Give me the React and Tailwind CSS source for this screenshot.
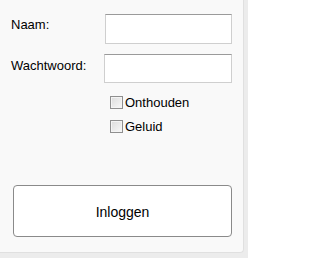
import React from 'react';

function Check({label}) {
  return (
    <label className="flex items-center gap-[2px] h-[13px]">
      <span className="w-[13px] h-[13px] border border-[#8f8f8f] bg-gradient-to-br from-[#dcdcdc] to-[#f8f8f8] shadow-[inset_0_0_0_1px_#f4f4f4]"></span>
      <span className="text-[13px] leading-none text-black">{label}</span>
    </label>
  );
}

export default function App() {
  return (
    <div className="w-[248px] h-[258px] bg-[#ececec] font-['Liberation_Sans',Arial,sans-serif]">
      <div className="w-[244px] h-[253px] bg-[#f9f9f9] rounded-br-[4px] border-r border-b border-[#e0e0e0] flex flex-col pl-[11px] pr-[11px]">
        <div className="flex items-center justify-between mt-[14px] h-[30px]">
          <span className="text-[13px] text-black -mt-[8px]">Naam:</span>
          <input className="w-[127px] h-[30px] bg-white border border-[#cfcfcf] border-t-[#9a9a9a] outline-none" />
        </div>
        <div className="flex items-center justify-between mt-[10px] h-[29px]">
          <span className="text-[13px] text-black -mt-[6px]">Wachtwoord:</span>
          <input type="password" className="w-[128px] h-[29px] bg-white border border-[#cfcfcf] border-t-[#9a9a9a] outline-none" />
        </div>
        <div className="flex flex-col gap-[11px] mt-[13px] pl-[99px]">
          <Check label="Onthouden" />
          <Check label="Geluid" />
        </div>
        <button className="mt-[52px] ml-[2px] w-[219px] h-[52px] pt-[3px] bg-white border border-[#8a8a8a] rounded-[4px] text-[14px] text-black">
          Inloggen
        </button>
      </div>
    </div>
  );
}
